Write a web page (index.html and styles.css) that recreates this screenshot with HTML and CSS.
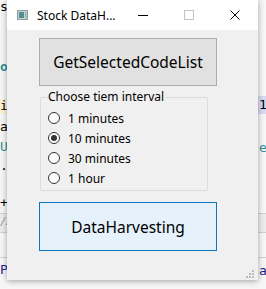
FILE: index.html
```html
<!DOCTYPE html>
<html>
<head>
<meta charset="utf-8">
<link rel="stylesheet" href="styles.css">
</head>
<body>
<div class="ide">
  <span class="frag band-yellow"></span>
  <span class="frag band-lav"></span>
  <span class="frag box"></span>
  <span class="frag hline"></span>
  <span class="frag c-s">s</span>
  <span class="frag c-o">o</span>
  <span class="frag c-i">i</span>
  <span class="frag c-a">a</span>
  <span class="frag c-u">U</span>
  <span class="frag c-dot">.</span>
  <span class="frag c-plus">+</span>
  <span class="frag c-ya">/A</span>
  <span class="frag c-p">P</span>
  <span class="frag c-1">1</span>
  <span class="frag c-e">e</span>
  <span class="frag c-a2">a</span>
</div>

<div class="window">
  <div class="titlebar">
    <svg class="app-icon" width="11" height="10" viewBox="0 0 11 10">
      <rect x="0.5" y="0.5" width="10" height="9" fill="#c9d3d6" stroke="#8a9a9f"/>
      <rect x="2" y="2" width="5" height="6" fill="#4f8f93"/>
      <rect x="8" y="2" width="1.5" height="6" fill="#9fb0b3"/>
    </svg>
    <span class="title">Stock DataH...</span>
    <div class="controls">
      <div class="ctl">
        <svg width="10" height="10" viewBox="0 0 10 10"><line x1="0" y1="5.5" x2="10" y2="5.5" stroke="#000" stroke-width="1"/></svg>
      </div>
      <div class="ctl">
        <svg width="10" height="10" viewBox="0 0 10 10"><rect x="0.5" y="0.5" width="9" height="9" fill="none" stroke="#c4c4c4" stroke-width="1"/></svg>
      </div>
      <div class="ctl">
        <svg width="10" height="10" viewBox="0 0 10 10"><path d="M0.5 0.5 L9.5 9.5 M9.5 0.5 L0.5 9.5" stroke="#000" stroke-width="1"/></svg>
      </div>
    </div>
  </div>

  <div class="content">
    <button class="btn">GetSelectedCodeList</button>

    <fieldset class="group">
      <legend>Choose tiem interval</legend>
      <label class="radio"><span class="dot"></span>1 minutes</label>
      <label class="radio"><span class="dot checked"></span>10 minutes</label>
      <label class="radio"><span class="dot"></span>30 minutes</label>
      <label class="radio"><span class="dot"></span>1 hour</label>
    </fieldset>

    <button class="btn btn-focus">DataHarvesting</button>
  </div>

  <svg class="grip" width="9" height="9" viewBox="0 0 9 9">
    <rect x="7" y="1" width="2" height="2" fill="#bdbdbd"/>
    <rect x="4" y="4" width="2" height="2" fill="#bdbdbd"/>
    <rect x="7" y="4" width="2" height="2" fill="#bdbdbd"/>
    <rect x="1" y="7" width="2" height="2" fill="#bdbdbd"/>
    <rect x="4" y="7" width="2" height="2" fill="#bdbdbd"/>
    <rect x="7" y="7" width="2" height="2" fill="#bdbdbd"/>
  </svg>
</div>
</body>
</html>
```

FILE: styles.css
```css
html, body {
  margin: 0;
  padding: 0;
}
body {
  width: 266px;
  height: 289px;
  overflow: hidden;
  position: relative;
  background: #f6f6f6;
  font-family: "Noto Sans", "Open Sans", sans-serif;
}

.ide {
  position: absolute;
  inset: 0;
  font-family: "DejaVu Sans Mono", "Liberation Mono", monospace;
  font-size: 13px;
  line-height: 14px;
  color: #000;
}
.frag { position: absolute; }
.band-yellow { left: 0; top: 99px; width: 8px; height: 15px; background: #fbf1d5; }
.band-lav { left: 256px; top: 96px; width: 10px; height: 18px; background: #d9d9f2; }
.box { left: 0; top: 213px; width: 266px; height: 18px; border-top: 1px solid #cfcfcf; border-bottom: 1px solid #cfcfcf; background: #ececec; }
.hline { left: 0; top: 257px; width: 266px; height: 1px; background: #d0d0d0; }
.c-s { left: 0; top: 0; }
.c-o { left: 0; top: 60px; color: #2b8f96; font-weight: bold; }
.c-i { left: 0; top: 99px; }
.c-a { left: 0; top: 120px; }
.c-u { left: 0; top: 140px; color: #2b8f96; }
.c-dot { left: 0; top: 159px; }
.c-plus { left: 0; top: 196px; }
.c-ya { left: 0; top: 215px; color: #9a9a9a; font-style: italic; font-size: 11px; }
.c-p { left: 0; top: 263px; color: #2a1f8c; }
.c-1 { left: 259px; top: 98px; }
.c-e { left: 259px; top: 141px; color: #2b8f96; }
.c-a2 { left: 259px; top: 264px; color: #1f1f7a; }

.window {
  position: absolute;
  left: 7px;
  top: 0;
  width: 251px;
  height: 280px;
  background: #f0f0f0;
  box-shadow: 0 1px 6px rgba(0, 0, 0, 0.35);
  display: flex;
  flex-direction: column;
}

.titlebar {
  height: 30px;
  flex: none;
  background: #fff;
  display: flex;
  align-items: center;
}
.app-icon { margin-left: 10px; flex: none; }
.title {
  margin-left: 9px;
  font-size: 12px;
  color: #000;
  white-space: nowrap;
}
.controls {
  margin-left: auto;
  display: flex;
  height: 100%;
}
.ctl {
  width: 46px;
  height: 100%;
  display: flex;
  align-items: center;
  justify-content: center;
}

.content {
  display: flex;
  flex-direction: column;
  padding: 8px 0 0 32px;
}

.btn {
  width: 178px;
  height: 48px;
  margin: 0;
  padding: 0;
  background: #e1e1e1;
  border: 1px solid #adadad;
  border-radius: 0;
  font-family: "Noto Sans", "Open Sans", sans-serif;
  font-size: 15.5px;
  color: #000;
}
.btn-focus {
  margin-top: 11px;
  height: 49px;
  background: #e5f1fb;
  border-color: #0a76c4;
}

.group {
  margin: 4px 0 0 1px;
  padding: 4px 0 2px 7px;
  width: 168px;
  box-sizing: border-box;
  border: 1px solid #dcdcdc;
  display: flex;
  flex-direction: column;
}
.group legend {
  font-size: 12px;
  line-height: 14px;
  padding: 0 2px 0 0;
  margin-left: 0;
  color: #000;
}
.radio {
  height: 20px;
  display: flex;
  align-items: center;
  font-size: 12px;
  color: #000;
}
.dot {
  width: 12px;
  height: 12px;
  box-sizing: border-box;
  border: 1px solid #333;
  border-radius: 50%;
  background: #fff;
  margin-right: 8px;
  position: relative;
  flex: none;
}
.dot.checked::after {
  content: "";
  position: absolute;
  left: 2px;
  top: 2px;
  width: 6px;
  height: 6px;
  border-radius: 50%;
  background: #333;
}

.grip {
  position: absolute;
  right: 4px;
  bottom: 2px;
}
```
